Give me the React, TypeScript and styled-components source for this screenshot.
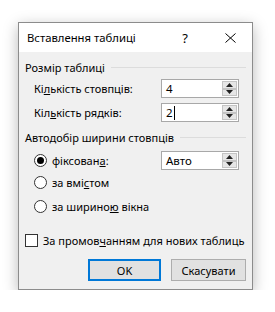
import styled, { createGlobalStyle } from "styled-components";

const GlobalStyle = createGlobalStyle`
  body {
    margin: 0;
    background: #ffffff;
    font-family: "Noto Sans", "Liberation Sans", sans-serif;
  }
`;

const Page = styled.div`
  padding: 22px 0 0 18px;
`;

const Dialog = styled.div`
  box-sizing: border-box;
  width: 235px;
  height: 268px;
  border: 1px solid #8c8c8c;
  background: #f0f0f0;
  box-shadow: 0 4px 14px rgba(0, 0, 0, 0.28);
  display: flex;
  flex-direction: column;
  color: #000;
  font-size: 11px;
  white-space: nowrap;
`;

const TitleBar = styled.div`
  height: 29px;
  background: #ffffff;
  display: flex;
  align-items: center;
  padding-left: 8px;
  padding-right: 16px;
  font-size: 11.3px;
`;

const TitleText = styled.span`
  flex: 1;
`;

const HelpMark = styled.span`
  font-size: 13px;
  margin-right: 37px;
`;

const Body = styled.div`
  display: flex;
  flex-direction: column;
  padding: 0 6px 0 6px;
`;

const GroupHeader = styled.div<{ $top: number }>`
  display: flex;
  align-items: center;
  gap: 6px;
  height: 16px;
  margin-top: ${({ $top }) => $top}px;
  &::after {
    content: "";
    flex: 1;
    height: 1px;
    background: #dcdcdc;
  }
`;

const Row = styled.div<{ $top: number }>`
  display: flex;
  align-items: center;
  height: 19px;
  margin-top: ${({ $top }) => $top}px;
  padding-left: 9px;
  padding-right: 7px;
`;

const Label = styled.span`
  flex: 1;
`;

const SpinBox = styled.div`
  box-sizing: border-box;
  width: 78px;
  height: 19px;
  border: 1px solid #a8a8a8;
  background: #ffffff;
  display: flex;
  align-items: center;
  padding: 1px;
  font-size: 11.5px;
`;

const SpinValue = styled.span`
  flex: 1;
  padding-left: 3px;
  display: flex;
  align-items: center;
`;

const Caret = styled.span`
  display: inline-block;
  width: 1px;
  height: 14px;
  background: #000;
  margin-left: 1px;
`;

const SpinButtons = styled.div`
  display: flex;
  flex-direction: column;
  width: 15px;
  height: 15px;
`;

const SpinButton = styled.div`
  flex: 1;
  box-sizing: border-box;
  border: 1px solid #c4c4c4;
  background: #e6e6e6;
  display: flex;
  align-items: center;
  justify-content: center;
`;

const Radio = styled.span<{ $checked?: boolean }>`
  box-sizing: border-box;
  width: 13px;
  height: 13px;
  border-radius: 50%;
  border: 1px solid #333;
  background: #fff;
  margin-right: 5px;
  display: flex;
  align-items: center;
  justify-content: center;
  &::after {
    content: "";
    width: 7px;
    height: 7px;
    border-radius: 50%;
    background: ${({ $checked }) => ($checked ? "#000" : "transparent")};
  }
`;

const CheckRow = styled.div`
  display: flex;
  align-items: center;
  height: 17px;
  margin-top: 16px;
`;

const CheckBox = styled.span`
  box-sizing: border-box;
  width: 13px;
  height: 13px;
  border: 1px solid #333;
  background: #fff;
  margin-right: 5px;
`;

const Buttons = styled.div`
  display: flex;
  justify-content: flex-end;
  gap: 10px;
  margin-top: 10px;
`;

const Button = styled.div<{ $default?: boolean; $w: number }>`
  box-sizing: border-box;
  width: ${({ $w }) => $w}px;
  height: 22px;
  background: #e1e1e1;
  border: ${({ $default }) => ($default ? "2px solid #0078d7" : "1px solid #adadad")};
  display: flex;
  align-items: center;
  justify-content: center;
`;

const Arrow = ({ up }: { up?: boolean }) => (
  <svg width="7" height="4" viewBox="0 0 7 4">
    <path d={up ? "M0 4 L3.5 0 L7 4 Z" : "M0 0 L3.5 4 L7 0 Z"} fill="#222" />
  </svg>
);

const Spin = ({ value, caret }: { value: string; caret?: boolean }) => (
  <SpinBox>
    <SpinValue>
      {value}
      {caret && <Caret />}
    </SpinValue>
    <SpinButtons>
      <SpinButton>
        <Arrow up />
      </SpinButton>
      <SpinButton>
        <Arrow />
      </SpinButton>
    </SpinButtons>
  </SpinBox>
);

export default function App() {
  return (
    <Page>
      <GlobalStyle />
      <Dialog>
        <TitleBar>
          <TitleText>Вставлення таблиці</TitleText>
          <HelpMark>?</HelpMark>
          <svg width="11" height="10" viewBox="0 0 11 10">
            <path d="M0.5 0.5 L10.5 9.5 M10.5 0.5 L0.5 9.5" stroke="#000" strokeWidth="1" />
          </svg>
        </TitleBar>
        <Body>
          <GroupHeader $top={7}>Розмір таблиці</GroupHeader>
          <Row $top={4}>
            <Label>
              Кі<u>л</u>ькість стовпців:
            </Label>
            <Spin value="4" />
          </Row>
          <Row $top={5}>
            <Label>
              Кіл<u>ь</u>кість рядків:
            </Label>
            <Spin value="2" caret />
          </Row>
          <GroupHeader $top={7}>Автодобір ширини стовпців</GroupHeader>
          <Row $top={6}>
            <Radio $checked />
            <Label>
              фіксован<u>а</u>:
            </Label>
            <Spin value="Авто" />
          </Row>
          <Row $top={3}>
            <Radio />
            <Label>
              за вмі<u>с</u>том
            </Label>
          </Row>
          <Row $top={5}>
            <Radio />
            <Label>
              за ширино<u>ю</u> вікна
            </Label>
          </Row>
          <CheckRow>
            <CheckBox />
            <span>
              За промов<u>ч</u>анням для нових таблиць
            </span>
          </CheckRow>
          <Buttons>
            <Button $default $w={73}>
              OK
            </Button>
            <Button $w={75}>Скасувати</Button>
          </Buttons>
        </Body>
      </Dialog>
    </Page>
  );
}
